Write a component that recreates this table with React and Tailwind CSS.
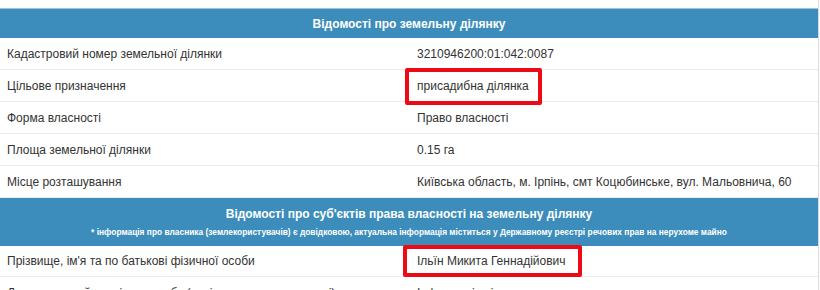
const landRows = [
  { label: "Кадастровий номер земельної ділянки", value: "3210946200:01:042:0087" },
  { label: "Цільове призначення", value: "присадибна ділянка" },
  { label: "Форма власності", value: "Право власності" },
  { label: "Площа земельної ділянки", value: "0.15 га" },
  { label: "Місце розташування", value: "Київська область, м. Ірпінь, смт Коцюбинське, вул. Мальовнича, 60" },
];

function Row({ label, value, h = "h-[32px]" }) {
  return (
    <div className={`flex ${h} border-b border-[#ececec] text-[12px] text-[#333]`}>
      <div className="w-[409px] pl-[7px] flex items-center whitespace-nowrap">{label}</div>
      <div className="flex-1 pl-[8px] flex items-center whitespace-nowrap">{value}</div>
    </div>
  );
}

export default function App() {
  return (
    <div className="relative w-[820px] h-[290px] bg-white overflow-hidden" style={{ fontFamily: '"Liberation Sans", Arial, sans-serif' }}>
      <div className="pt-[8px] w-[819px] border-r border-[#dcdcdc]">
        {/* Land section */}
        <div className="h-[30px] bg-[#3c8dbc] border-t border-[#9fc3da] flex items-center justify-center text-white text-[12px] font-bold">
          Відомості про земельну ділянку
        </div>
        {landRows.map((r) => (
          <Row key={r.label} label={r.label} value={r.value} />
        ))}

        {/* Owners section */}
        <div className="h-[48px] bg-[#3c8dbc] flex flex-col items-center justify-center text-white font-bold">
          <div className="text-[12px] leading-[18px]">Відомості про суб'єктів права власності на земельну ділянку</div>
          <div className="text-[8.4px] leading-[14px] mt-[2px] whitespace-nowrap">
            * інформація про власника (землекористувачів) є довідковою, актуальна інформація міститься у Державному реєстрі речових прав на нерухоме майно
          </div>
        </div>
        <Row label="Прізвище, ім'я та по батькові фізичної особи" value="Ільїн Микита Геннадійович" h="h-[31px]" />
        <Row label="Документ, який посвідчує особу (серія, номер, дата видачі)" value="Інформація відсутня" />
      </div>

      {/* red annotation boxes */}
      <div className="absolute left-[405px] top-[68px] w-[137px] h-[37px] border-[4px] border-[#ee0a14] rounded-[2px]" />
      <div className="absolute left-[403px] top-[245px] w-[179px] h-[32px] border-[4px] border-[#ee0a14] rounded-[2px]" />
    </div>
  );
}
